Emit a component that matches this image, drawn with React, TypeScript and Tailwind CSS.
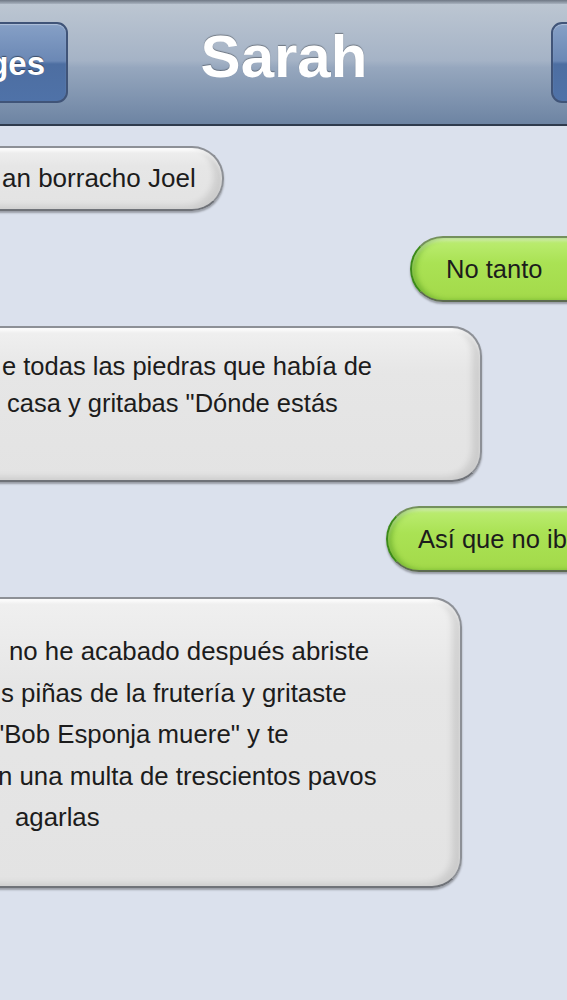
import React from "react";

const font = { fontFamily: '"Liberation Sans", Arial, sans-serif' };

function GrayBubble({
  width,
  radius,
  children,
  className,
}: {
  width: string;
  radius: string;
  children: React.ReactNode;
  className: string;
}) {
  return (
    <div
      className={`${width} ${radius} ${className} ml-[-40px] pl-[40px] border-2 border-[#8d9096] border-b-[#6f7278] bg-[linear-gradient(to_bottom,#f0f0f0_0%,#e6e6e6_30%,#e3e3e3_100%)] shadow-[0_2px_2px_rgba(0,0,0,0.3),inset_-8px_-3px_6px_rgba(0,0,0,0.1),inset_0_3px_3px_rgba(255,255,255,0.9)] text-[#1c1c1c] whitespace-nowrap overflow-hidden`}
    >
      {children}
    </div>
  );
}

function GreenBubble({ left, text, className }: { left: string; text: string; className: string }) {
  return (
    <div
      className={`${left} ${className} w-[320px] h-[66px] shrink-0 rounded-l-[33px] border-2 border-r-0 border-[#74905c] border-l-[#3c8a1a] border-b-[#5c6a50] bg-[linear-gradient(to_bottom,#bdee74_0%,#aae254_40%,#a3da4a_100%)] shadow-[0_2px_2px_rgba(0,0,0,0.3),inset_4px_0_5px_rgba(40,120,10,0.35),inset_0_3px_3px_rgba(255,255,255,0.45)] flex items-center text-[25.5px] text-[#1c1c1c] whitespace-nowrap`}
    >
      {text}
    </div>
  );
}

export default function App() {
  return (
    <div className="w-[567px] h-[1000px] overflow-hidden bg-[#dbe1ed]" style={font}>
      {/* Header */}
      <div className="h-[4px] bg-[linear-gradient(to_bottom,#6e7784,#a9b3c0)]" />
      <div className="h-[120px] bg-[linear-gradient(to_bottom,#bcc6d2_0%,#a5b3c6_47%,#96a7be_53%,#6d84a3_100%)] flex items-center">
        <div className="ml-[-60px] w-[128px] h-[81px] mb-[3px] shrink-0 rounded-[11px] border-2 border-[#405478] bg-[linear-gradient(to_bottom,#86a0c6_0%,#6b88b5_48%,#4d6ea1_52%,#4f72a8_100%)] shadow-[inset_0_1px_1px_rgba(255,255,255,0.35)] flex items-center justify-end pr-[21px]">
          <span className="text-white font-bold text-[33px] leading-none [text-shadow:0_-1px_1px_rgba(0,0,0,0.45)] mt-[2px]">
            ges
          </span>
        </div>
        <div className="flex-1 text-center pr-[51px] mb-[14px]">
          <span className="text-white font-bold text-[60px] leading-none [text-shadow:0_-1px_1px_rgba(0,0,0,0.35)]">
            Sarah
          </span>
        </div>
        <div className="w-[100px] h-[81px] mb-[3px] mr-[-84px] shrink-0 rounded-[11px] border-2 border-[#405478] bg-[linear-gradient(to_bottom,#86a0c6_0%,#6b88b5_48%,#4d6ea1_52%,#4f72a8_100%)] shadow-[inset_0_1px_1px_rgba(255,255,255,0.35)]" />
      </div>
      <div className="h-[2px] bg-[#2f3b4d]" />

      {/* Messages */}
      <div className="flex flex-col">
        <div className="flex mt-[20px]">
          <GrayBubble width="w-[264px]" radius="rounded-r-[32px]" className="h-[65px] text-[26px] flex items-center">
            <span>an borracho Joel</span>
          </GrayBubble>
        </div>

        <div className="flex mt-[25px]">
          <GreenBubble left="ml-[410px]" className="pl-[34px]" text="No tanto" />
        </div>

        <div className="flex mt-[24px]">
          <GrayBubble width="w-[522px]" radius="rounded-r-[30px]" className="h-[156px] pt-[20px] text-[25.5px] leading-[37px] flex flex-col">
            <span>e todas las piedras que había de</span>
            <span className="ml-[5px]">casa y gritabas "Dónde estás</span>
          </GrayBubble>
        </div>

        <div className="flex mt-[24px]">
          <GreenBubble left="ml-[386px]" className="pl-[30px]" text="Así que no iba tan borracho" />
        </div>

        <div className="flex mt-[25px]">
          <GrayBubble width="w-[502px]" radius="rounded-r-[30px]" className="h-[291px] pt-[32px] text-[25.8px] leading-[41.5px] flex flex-col">
            <span className="ml-[7px]">no he acabado después abriste</span>
            <span className="ml-[-1px]">s piñas de la frutería y gritaste</span>
            <span className="ml-[-7px]">"Bob Esponja muere" y te</span>
            <span className="ml-[-4px]">n una multa de trescientos pavos</span>
            <span className="ml-[13px]">agarlas</span>
          </GrayBubble>
        </div>
      </div>
    </div>
  );
}
